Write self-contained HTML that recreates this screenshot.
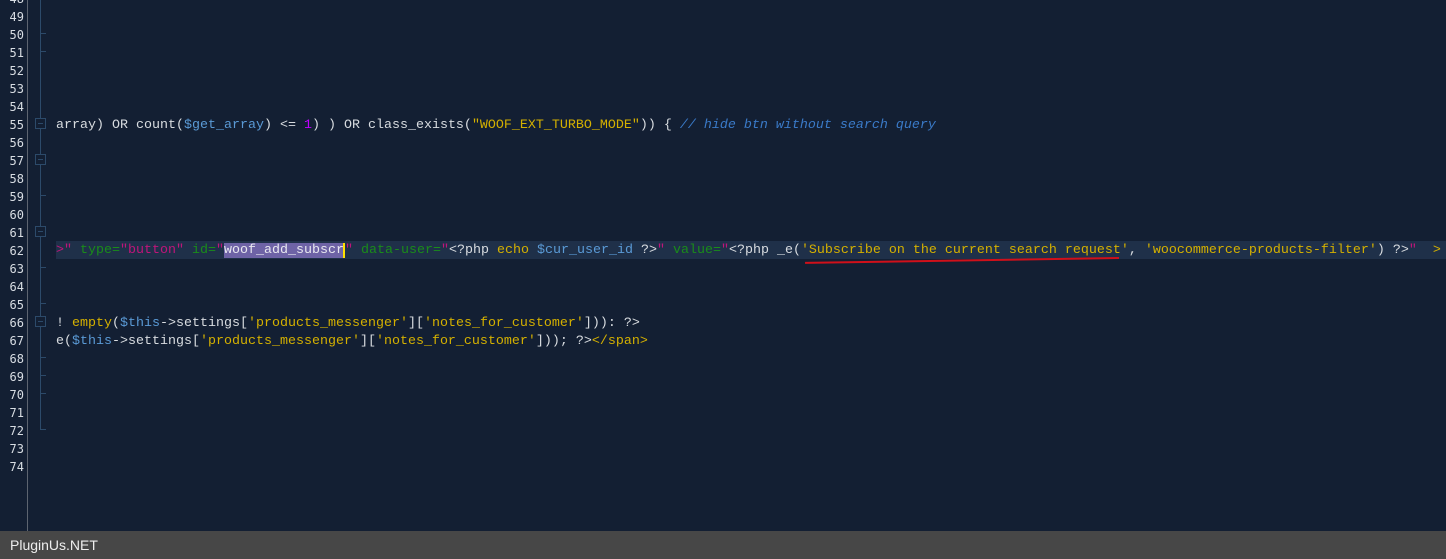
<!DOCTYPE html>
<html><head><meta charset="utf-8"><style>
body{margin:0;width:1446px;height:559px;background:#131f33;overflow:hidden;position:relative;font-family:"Liberation Mono",monospace}
.ln{position:absolute;left:0;width:24px;text-align:right;color:#d8dde3;font:12px "DejaVu Sans Mono",monospace;line-height:18px}
.gut{position:absolute;left:27px;top:0;width:1px;height:531px;background:#5d6470}
.fl{position:absolute;left:40px;width:1px;background:#2c4a6a}
.tk{position:absolute;left:40px;width:6px;height:1px;background:#2c4a6a}
.bx{position:absolute;left:35px;width:9px;height:9px;border:1px solid #2c4a6a;background:#131f33}
.bx:after{content:"";position:absolute;left:2px;top:4px;width:5px;height:1px;background:#2c4a6a}
.code{position:absolute;left:56px;white-space:pre;font-size:13.33px;line-height:18px;color:#d8dce0}
.v{color:#5a9ad6}.n{color:#c000ff}.s{color:#d4b000}.c{color:#3a7ac8;font-style:italic}.g{color:#1a8c1a}.p{color:#c0157a}
.hl{position:absolute;left:56px;top:241px;width:1390px;height:18px;background:#1f3049}
.sel{background:#6e63a6;color:#e8e8f0}
.foot{position:absolute;left:0;top:531px;width:1446px;height:28px;background:#474747;color:#eee;font:14px "Liberation Sans",sans-serif;line-height:28px;padding-left:10px;box-sizing:border-box}
</style></head><body>
<div class="gut"></div>
<div class="fl" style="top:0;height:430px"></div>
<div class="tk" style="top:33px"></div><div class="tk" style="top:51px"></div>
<div class="tk" style="top:195px"></div><div class="tk" style="top:267px"></div>
<div class="tk" style="top:303px"></div><div class="tk" style="top:357px"></div>
<div class="tk" style="top:375px"></div><div class="tk" style="top:393px"></div>
<div class="tk" style="top:429px"></div>
<div class="bx" style="top:118px"></div><div class="bx" style="top:154px"></div>
<div class="bx" style="top:226px"></div><div class="bx" style="top:316px"></div>
<div class="ln" style="top:-10px">48<br>49<br>50<br>51<br>52<br>53<br>54<br>55<br>56<br>57<br>58<br>59<br>60<br>61<br>62<br>63<br>64<br>65<br>66<br>67<br>68<br>69<br>70<br>71<br>72<br>73<br>74</div>
<div class="hl"></div>
<div class="code" style="top:117px">array) OR count(<span class="v">$get_array</span>) &lt;= <span class="n">1</span>) ) OR class_exists(<span class="s">"WOOF_EXT_TURBO_MODE"</span>)) { <span class="c">// hide btn without search query</span></div>
<div class="code" style="top:242px"><span class="p">&gt;"</span> <span class="g">type=</span><span class="p">"button"</span> <span class="g">id=</span><span class="p">"</span><span class="sel">woof_add_subscr</span><span style="border-left:2px solid #ffe000;margin-left:-1px"></span><span class="p">"</span> <span class="g">data-user=</span><span class="p">"</span>&lt;?php <span class="s">echo</span> <span class="v">$cur_user_id</span> ?&gt;<span class="p">"</span> <span class="g">value=</span><span class="p">"</span>&lt;?php _e(<span class="s">'Subscribe on the current search request'</span>, <span class="s">'woocommerce-products-filter'</span>) ?&gt;<span class="p">"</span>  <span class="s">&gt;</span></div>
<div style="position:absolute;left:805px;top:257px;width:314px;height:2px;background:#d0101a;transform:rotate(-0.9deg);transform-origin:right"></div>
<div class="code" style="top:315px">! <span class="s">empty</span>(<span class="v">$this</span>-&gt;settings[<span class="s">'products_messenger'</span>][<span class="s">'notes_for_customer'</span>])): ?&gt;</div>
<div class="code" style="top:333px">e(<span class="v">$this</span>-&gt;settings[<span class="s">'products_messenger'</span>][<span class="s">'notes_for_customer'</span>])); ?&gt;<span class="s">&lt;/span&gt;</span></div>
<div class="foot">PluginUs.NET</div>
</body></html>
